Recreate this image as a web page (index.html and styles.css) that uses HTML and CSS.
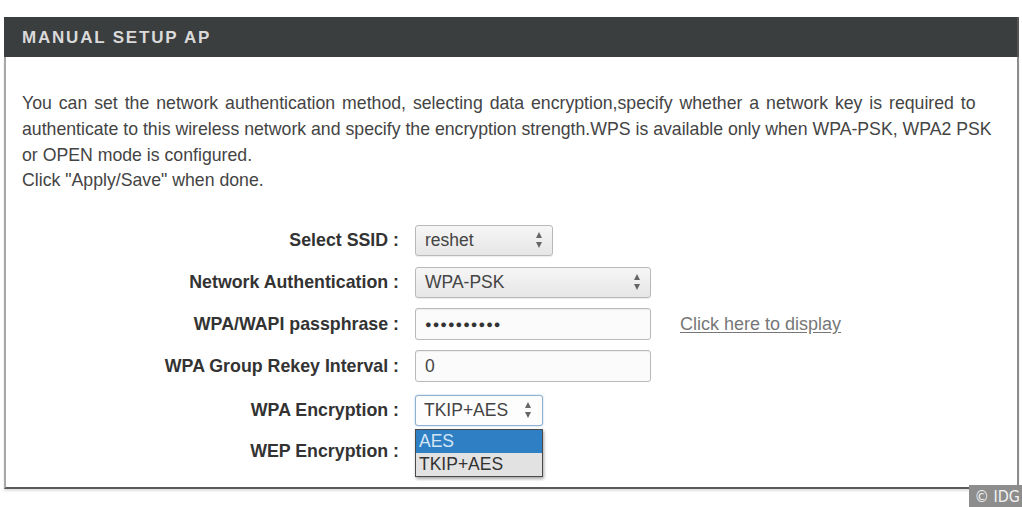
FILE: index.html
```html
<!DOCTYPE html>
<html>
<head>
<meta charset="utf-8">
<link rel="stylesheet" href="styles.css">
</head>
<body>
<div class="page">
  <div class="titlebar">MANUAL SETUP AP</div>
  <div class="panel">
    <p class="intro"><span class="wide">You can set the network authentication method, selecting data encryption,specify whether a network key is required to</span><br>authenticate to this wireless network and specify the encryption strength.WPS is available only when WPA-PSK, WPA2 PSK<br>or OPEN mode is configured.<br>Click "Apply/Save" when done.</p>
    <div class="form">
      <div class="row">
        <div class="label">Select SSID :</div>
        <div class="select w-ssid"><span>reshet</span><span class="arrows"><i class="up"></i><i class="down"></i></span></div>
      </div>
      <div class="row">
        <div class="label">Network Authentication :</div>
        <div class="select w-wide"><span>WPA-PSK</span><span class="arrows"><i class="up"></i><i class="down"></i></span></div>
      </div>
      <div class="row">
        <div class="label">WPA/WAPI passphrase :</div>
        <div class="input w-wide dots">●●●●●●●●●●</div>
        <a class="reveal">Click here to display</a>
      </div>
      <div class="row">
        <div class="label">WPA Group Rekey Interval :</div>
        <div class="input w-wide">0</div>
      </div>
      <div class="row tall">
        <div class="label">WPA Encryption :</div>
        <div class="select focused w-enc"><span>TKIP+AES</span><span class="arrows"><i class="up"></i><i class="down"></i></span>
          <ul class="dropdown">
            <li class="sel">AES</li>
            <li>TKIP+AES</li>
          </ul>
        </div>
      </div>
      <div class="row short">
        <div class="label">WEP Encryption :</div>
      </div>
    </div>
  </div>
  <div class="badge">© IDG</div>
</div>
</body>
</html>
```
FILE: styles.css
```css
* { box-sizing: border-box; }
html, body { margin: 0; padding: 0; background: #fff; }
body {
  font-family: "Liberation Sans", Arial, sans-serif;
  color: #444;
  width: 1022px;
  height: 507px;
  overflow: hidden;
  position: relative;
}
.page {
  padding: 17px 3px 0 4px;
}
.titlebar {
  height: 40px;
  background: #3b3e3e;
  color: #dadada;
  font-weight: bold;
  font-size: 17px;
  letter-spacing: 1.8px;
  padding-left: 18px;
  line-height: 42px;
  border-right: 2px solid #555;
}
.panel {
  height: 432px;
  border-left: 2px solid #a8a8a8;
  border-right: 2px solid #8c8c8c;
  border-bottom: 2px solid #5a5a5a;
  box-shadow: 0 2px 2px rgba(0,0,0,0.12);
}
.intro {
  margin: 0;
  padding: 34px 0 0 16px;
  font-size: 17.7px;
  line-height: 25.8px;
  color: #444;
  white-space: nowrap;
}
.intro .wide { word-spacing: 2px; }
.form {
  padding-top: 25px;
}
.row {
  display: flex;
  align-items: center;
  height: 42px;
}
.row.tall { height: 46px; }
.row.short { height: 36px; }
.label {
  width: 394px;
  text-align: right;
  font-weight: bold;
  font-size: 17.8px;
  color: #333;
  padding-right: 1px;
}
.select, .input {
  margin-left: 15px;
  height: 31px;
  border: 1px solid #b9b9b9;
  border-radius: 3px;
  font-size: 17.5px;
  color: #444;
  display: flex;
  align-items: center;
  padding-left: 9px;
  position: relative;
}
.select {
  background: linear-gradient(#f6f6f6, #e6e6e6);
  justify-content: space-between;
  padding-right: 10px;
  box-shadow: 0 1px 1px rgba(0,0,0,0.08);
}
.input {
  height: 32px;
  background: #fbfbfb;
  box-shadow: inset 0 1px 1px rgba(0,0,0,0.06);
}
.w-ssid { width: 138px; }
.w-wide { width: 236px; }
.w-enc { width: 128px; }
.dots {
  font-size: 11px;
  letter-spacing: 1px;
  color: #333;
}
.arrows {
  display: flex;
  flex-direction: column;
  align-items: center;
  gap: 4px;
}
.arrows i {
  display: block;
  width: 0; height: 0;
  border-left: 3.5px solid transparent;
  border-right: 3.5px solid transparent;
}
.arrows .up { border-bottom: 6px solid #666; }
.arrows .down { border-top: 6px solid #666; }
.select.focused {
  background: #fdfdfd;
  border-color: #8fb0cf;
  box-shadow: 0 0 2px rgba(80,140,200,0.5);
  padding-left: 8px;
  padding-right: 11px;
}
.reveal {
  margin-left: 29px;
  color: #777;
  font-size: 18px;
  text-decoration: underline;
  text-underline-offset: 2px;
}
.dropdown {
  position: absolute;
  left: -1px;
  top: 33px;
  width: 128px;
  margin: 0;
  padding: 0;
  list-style: none;
  border: 1px solid #4a4a4a;
  box-shadow: 1px 2px 3px rgba(0,0,0,0.35);
  background: #e2e2e2;
  z-index: 2;
}
.dropdown li {
  height: 23px;
  line-height: 23px;
  padding-left: 3px;
  font-size: 17.5px;
  color: #333;
}
.dropdown li.sel {
  background: #2f7fc4;
  color: #d4e6f6;
}
.badge {
  position: absolute;
  right: 0;
  bottom: 0;
  width: 53px;
  height: 22px;
  background: #8d8d8d;
  color: #f2f2f2;
  font-family: "DejaVu Sans Condensed", "DejaVu Sans", sans-serif;
  font-size: 16px;
  line-height: 23px;
  text-align: right;
  padding-right: 2px;
  white-space: nowrap;
}
```
